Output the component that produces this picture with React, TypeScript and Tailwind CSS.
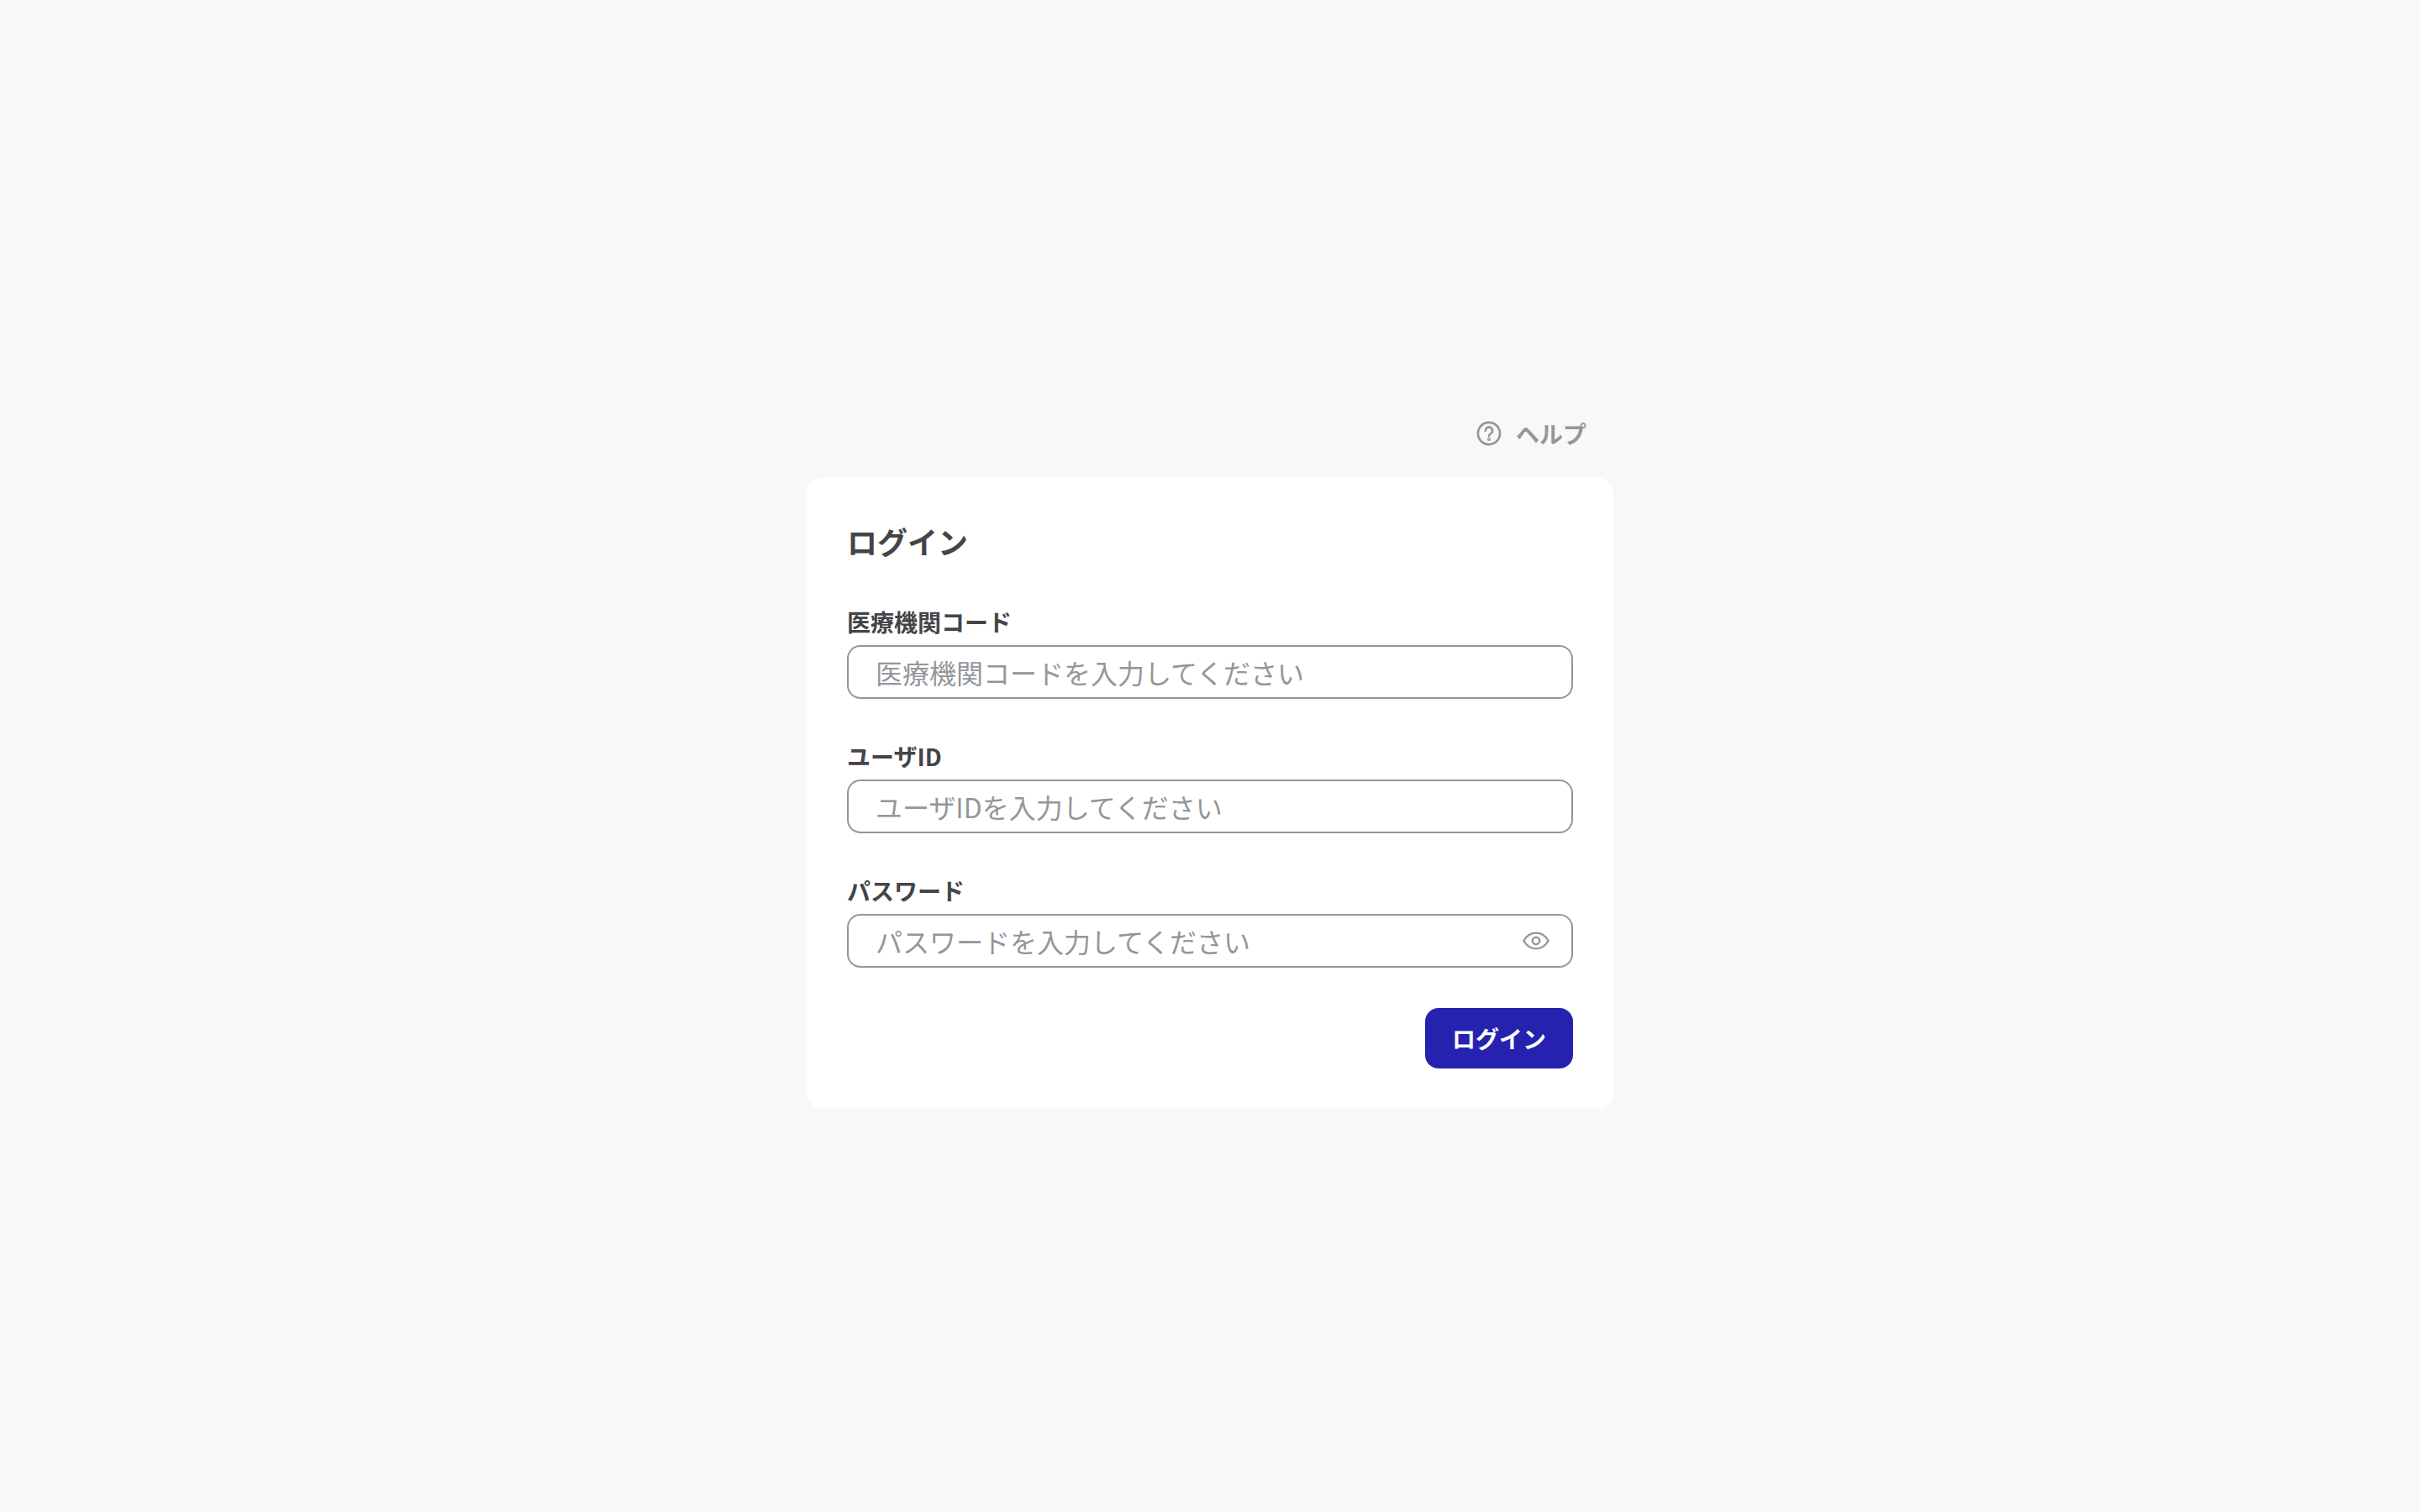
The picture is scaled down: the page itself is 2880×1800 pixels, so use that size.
import React from "react";

const font = { fontFamily: '"Noto Sans CJK JP", sans-serif' };

function Field({ label, placeholder, eye }: { label: string; placeholder: string; eye?: boolean }) {
  return (
    <div className="flex flex-col gap-2">
      <label className="h-10 text-[28px] leading-10 font-bold text-[#444548]">{label}</label>
      <div className="flex h-16 items-center rounded-2xl border-2 border-[#94969a] bg-white pl-8 pr-[26px]">
        <input
          placeholder={placeholder}
          className="min-w-0 flex-1 bg-transparent text-[32px] outline-none placeholder:text-[#94969a]"
        />
        {eye && (
          <svg width="32" height="32" viewBox="0 0 24 24" fill="none" stroke="#94969a" strokeWidth="1.8">
            <path d="M1 12c2.700-4.700 6.400-7 11-7s8.300 2.300 11 7c-2.700 4.700-6.400 7-11 7S3.700 16.700 1 12Z" />
            <circle cx="12" cy="12" r="3.200" />
          </svg>
        )}
      </div>
    </div>
  );
}

export default function App() {
  return (
    <div style={font} className="flex h-[1800px] w-[2880px] items-center justify-center bg-[#f8f8f8]">
      <div className="flex w-[960px] flex-col">
        <div className="flex h-[88px] items-center justify-end gap-4 pr-8 pb-4">
          <svg width="32" height="32" viewBox="0 0 24 24" fill="none" stroke="#94969a" strokeWidth="2" strokeLinecap="round">
            <circle cx="12" cy="12" r="9.800" />
            <path d="M8.900 9.500a3.100 3.100 0 1 1 4.900 2.500c-1.100 .7-1.800 1.200-1.800 2.300" />
            <circle cx="12" cy="17.300" r="0.500" fill="#94969a" />
          </svg>
          <span className="text-[28px] font-bold text-[#94969a]">ヘルプ</span>
        </div>
        <div className="flex flex-col gap-12 rounded-[20px] bg-white p-12">
          <h1 className="h-14 text-[36px] leading-14 font-bold text-[#444548]">ログイン</h1>
          <div className="flex flex-col gap-12">
            <Field label="医療機関コード" placeholder="医療機関コードを入力してください" />
            <Field label="ユーザID" placeholder="ユーザIDを入力してください" />
            <Field label="パスワード" placeholder="パスワードを入力してください" eye />
          </div>
          <div className="flex justify-end">
            <button className="h-[72px] w-[176px] rounded-2xl bg-[#2522b0] text-[28px] font-bold text-white">ログイン</button>
          </div>
        </div>
      </div>
    </div>
  );
}
